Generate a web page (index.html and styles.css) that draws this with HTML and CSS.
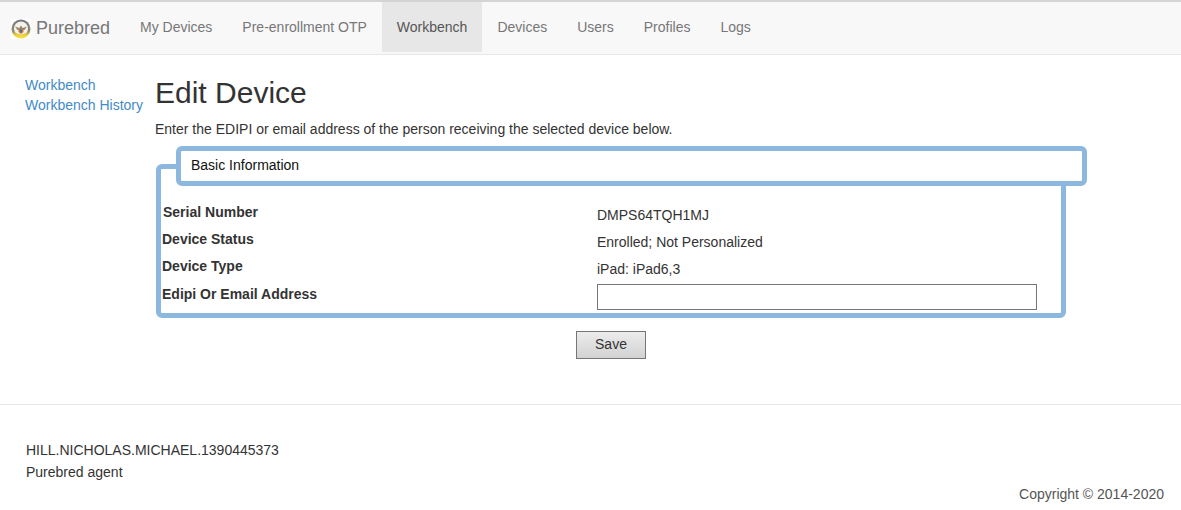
FILE: index.html
```html
<!DOCTYPE html>
<html lang="en">
<head>
<meta charset="utf-8">
<title>Edit Device</title>
<link rel="stylesheet" href="styles.css">
</head>
<body>
<nav class="navbar">
  <a class="brand" href="#">
    <svg class="logo" width="20" height="20" viewBox="0 0 20 20" aria-hidden="true">
      <defs>
        <linearGradient id="ring" x1="0" y1="0" x2="0" y2="1">
          <stop offset="0" stop-color="#6f7680"/>
          <stop offset="0.6" stop-color="#8f8d70"/>
          <stop offset="0.85" stop-color="#f2d73a"/>
          <stop offset="1" stop-color="#f6e04a"/>
        </linearGradient>
      </defs>
      <rect width="20" height="20" fill="#fff"/>
      <circle cx="10" cy="10" r="9.5" fill="url(#ring)"/>
      <circle cx="10" cy="9.5" r="7" fill="#f4f2ea"/>
      <path d="M4 7.5 L8.3 9 L10 6.5 L11.7 9 L16 7.5 L13.5 11 L6.5 11 Z" fill="#94896e"/>
      <path d="M7.5 10.5 H12.5 V13 L10 15 L7.5 13 Z" fill="#d07a3a"/>
      <path d="M9 10.5 H11 V13.5 H9 Z" fill="#4f6c98"/>
      <path d="M5 14.5 Q10 17.5 15 14.5" stroke="#e6c92f" stroke-width="1.2" fill="none"/>
    </svg>
    <span>Purebred</span>
  </a>
  <ul class="nav-links">
    <li><a href="#">My Devices</a></li>
    <li><a href="#">Pre-enrollment OTP</a></li>
    <li class="active"><a href="#">Workbench</a></li>
    <li><a href="#">Devices</a></li>
    <li><a href="#">Users</a></li>
    <li><a href="#">Profiles</a></li>
    <li><a href="#">Logs</a></li>
  </ul>
</nav>
<div class="layout">
  <aside class="sidebar">
    <a href="#">Workbench</a>
    <a href="#">Workbench History</a>
  </aside>
  <main class="content">
    <h1>Edit Device</h1>
    <p class="intro">Enter the EDIPI or email address of the person receiving the selected device below.</p>
    <form>
      <fieldset class="panel">
        <legend>Basic Information</legend>
        <div class="row"><label class="first">Serial Number</label><span>DMPS64TQH1MJ</span></div>
        <div class="row"><label>Device Status</label><span>Enrolled; Not Personalized</span></div>
        <div class="row"><label>Device Type</label><span>iPad: iPad6,3</span></div>
        <div class="row input-row"><label for="edipi">Edipi Or Email Address</label><input id="edipi" type="text"></div>
      </fieldset>
      <div class="actions"><button type="button">Save</button></div>
    </form>
  </main>
</div>
<footer class="footer">
  <div class="user">
    <div>HILL.NICHOLAS.MICHAEL.1390445373</div>
    <div>Purebred agent</div>
  </div>
  <div class="copyright">Copyright © 2014-2020</div>
</footer>
</body>
</html>
```
FILE: styles.css
```css
* { box-sizing: border-box; }
html, body { margin: 0; padding: 0; }
body {
  font-family: "Liberation Sans", Arial, sans-serif;
  font-size: 14px;
  line-height: 20px;
  color: #333;
  background: #fff;
  overflow: hidden;
}
a { text-decoration: none; }
.navbar {
  display: flex;
  height: 55px;
  background: #f8f8f8;
  border-top: 2px solid #d4d4d4;
  border-bottom: 1px solid #e7e7e7;
}
.brand {
  display: flex;
  align-items: center;
  width: 125px;
  padding-left: 11px;
  color: #777;
  font-size: 18px;
}
.brand span { margin-left: 5px; }
.logo { flex: none; margin-top: 1px; }
.nav-links {
  display: flex;
  list-style: none;
  margin: 0;
  padding: 0;
}
.nav-links a {
  display: block;
  height: 50px;
  padding: 15px;
  color: #777;
}
.nav-links .active a {
  background: #e7e7e7;
  color: #555;
}
.layout { display: flex; height: 350px; border-bottom: 1px solid #e7e7e7; }
.sidebar {
  width: 155px;
  flex: none;
  padding: 20px 0 0 25px;
}
.sidebar a { display: block; color: #428bca; white-space: nowrap; }
.content { width: 940px; }
h1 {
  margin: 20px 0 6px;
  font-size: 30px;
  font-weight: 400;
  line-height: 36px;
  height: 36px;
  color: #333;
}
.intro { margin: 0; height: 29px; padding-top: 2px; }
.panel {
  width: 910px;
  height: 172px;
  margin: 0 0 0 1px;
  padding: 0 0 0 1px;
  min-width: 0;
  border: 5px solid #8cb8df;
  border-radius: 6px;
}
legend {
  width: 911px;
  max-width: none;
  height: 40px;
  margin-left: 14px;
  padding: 0 0 0 10px;
  background: #fff;
  border: 5px solid #8cb8df;
  border-radius: 6px;
  color: #111;
  line-height: 28px;
}
.row {
  display: flex;
  height: 27px;
  align-items: flex-start;
}
.row:first-of-type { margin-top: 16px; }
.row label {
  width: 435px;
  flex: none;
  font-weight: 700;
}
.row label.first { padding-left: 1px; }
.row span { padding-top: 3px; }
.input-row label { padding-top: 1px; }
.input-row input {
  width: 440px;
  height: 26px;
  margin: 1px 0 0;
  padding: 1px 2px;
  border: 1px solid #767676;
  background: #fff;
  font: inherit;
}
.actions { display: flex; justify-content: center; margin-top: 13px; padding-right: 28px; }
.actions button {
  width: 70px;
  height: 28px;
  padding: 0 0 2px;
  border: 1px solid #767676;
  background: linear-gradient(#ececec, #d2d2d2);
  color: #333;
  font: inherit;
}
.footer {
  display: flex;
  justify-content: space-between;
  align-items: flex-start;
  height: 105px;
  padding: 35px 17px 0 26px;
}
.user div + div { margin-top: 2px; }
.copyright { color: #555; margin-top: 44px; }
```
